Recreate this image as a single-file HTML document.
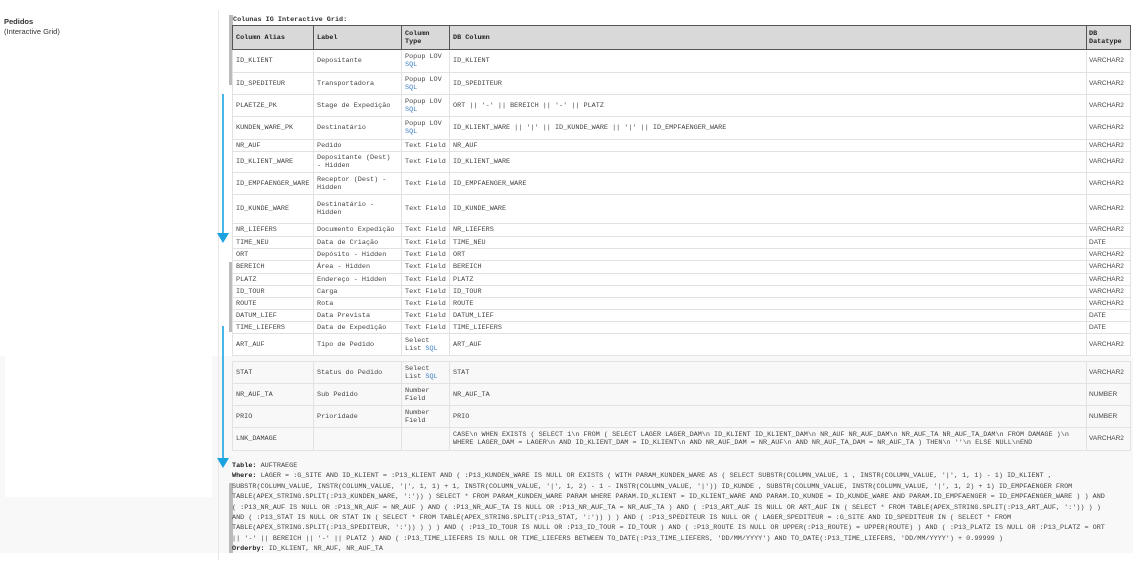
<!DOCTYPE html>
<html><head><meta charset="utf-8"><style>
*{margin:0;padding:0;box-sizing:border-box}
body{width:1133px;height:562px;background:#fff;position:relative;overflow:hidden;font-family:"Liberation Mono",monospace;color:#444}
.abs{position:absolute}
table{position:absolute;left:232px;top:25px;border-collapse:collapse;font-size:6.8px;width:898px;table-layout:fixed}
td,th{border:1px solid #e2e2e2;padding:0 3px;vertical-align:middle;white-space:nowrap;overflow:hidden;line-height:8px;text-align:left}
th{background:#d9d9d9;border:1px solid #555;font-weight:bold;color:#222;height:24px;white-space:normal}
td.w{white-space:normal}
.s{color:#3b7cc4}
.dt{font-family:"Liberation Sans",sans-serif;font-size:6.5px;padding:0 2px}
.code{position:absolute;left:232px;top:461px;font-size:6.8px;line-height:10.4px;white-space:pre;color:#444}
b{color:#222}
</style></head><body>
<div class="abs" style="left:0;top:356px;width:1133px;height:197px;background:#f8f8f8"></div>
<div class="abs" style="left:5px;top:356px;width:207px;height:141px;background:#fff"></div>
<div class="abs" style="left:218px;top:10px;width:1px;height:550px;background:#e8e8e8"></div>
<div class="abs" style="left:4px;top:17px;font-family:'Liberation Sans',sans-serif;font-size:7.5px;line-height:10px;color:#333"><b style="color:#333">Pedidos</b><br>(Interactive Grid)</div>
<div class="abs" style="left:229px;top:15px;width:4px;height:70px;background:#bbb"></div>
<div class="abs" style="left:229px;top:262px;width:4px;height:70px;background:#bbb"></div>
<div class="abs" style="left:229px;top:483px;width:4px;height:70px;background:#bbb"></div>
<svg class="abs" style="left:216px;top:90px" width="16" height="380">
<line x1="7" y1="4" x2="7" y2="146" stroke="#1aa3e0" stroke-width="1.6"/><polygon points="1,143 13,143 7,153" fill="#1aa3e0"/>
<line x1="7" y1="236" x2="7" y2="372" stroke="#1aa3e0" stroke-width="1.6"/><polygon points="1,368 13,368 7,378" fill="#1aa3e0"/>
</svg>
<div class="abs" style="left:233px;top:16px;font-size:6.8px;font-weight:bold;color:#333">Colunas IG Interactive Grid:</div>
<table>
<colgroup><col style="width:81px"><col style="width:88px"><col style="width:48px"><col style="width:637px"><col style="width:44px"></colgroup>
<tr><th>Column Alias</th><th>Label</th><th>Column Type</th><th>DB Column</th><th style="padding:0 2px">DB Datatype</th></tr>
<tr style="height:23px"><td>ID_KLIENT</td><td>Depositante</td><td class="w">Popup LOV <span class="s">SQL</span></td><td>ID_KLIENT</td><td class="dt">VARCHAR2</td></tr>
<tr style="height:22px"><td>ID_SPEDITEUR</td><td>Transportadora</td><td class="w">Popup LOV <span class="s">SQL</span></td><td>ID_SPEDITEUR</td><td class="dt">VARCHAR2</td></tr>
<tr style="height:22px"><td>PLAETZE_PK</td><td>Stage de Expedição</td><td class="w">Popup LOV <span class="s">SQL</span></td><td>ORT || '-' || BEREICH || '-' || PLATZ</td><td class="dt">VARCHAR2</td></tr>
<tr style="height:23px"><td>KUNDEN_WARE_PK</td><td>Destinatário</td><td class="w">Popup LOV <span class="s">SQL</span></td><td>ID_KLIENT_WARE || '|' || ID_KUNDE_WARE || '|' || ID_EMPFAENGER_WARE</td><td class="dt">VARCHAR2</td></tr>
<tr style="height:12px"><td>NR_AUF</td><td>Pedido</td><td>Text Field</td><td>NR_AUF</td><td class="dt">VARCHAR2</td></tr>
<tr style="height:21px"><td>ID_KLIENT_WARE</td><td class="w">Depositante (Dest) - Hidden</td><td>Text Field</td><td>ID_KLIENT_WARE</td><td class="dt">VARCHAR2</td></tr>
<tr style="height:22px"><td>ID_EMPFAENGER_WARE</td><td class="w">Receptor (Dest) - Hidden</td><td>Text Field</td><td>ID_EMPFAENGER_WARE</td><td class="dt">VARCHAR2</td></tr>
<tr style="height:29px"><td>ID_KUNDE_WARE</td><td class="w">Destinatário - Hidden</td><td>Text Field</td><td>ID_KUNDE_WARE</td><td class="dt">VARCHAR2</td></tr>
<tr style="height:13px"><td>NR_LIEFERS</td><td>Documento Expedição</td><td>Text Field</td><td>NR_LIEFERS</td><td class="dt">VARCHAR2</td></tr>
<tr style="height:12px"><td>TIME_NEU</td><td>Data de Criação</td><td>Text Field</td><td>TIME_NEU</td><td class="dt">DATE</td></tr>
<tr style="height:12px"><td>ORT</td><td>Depósito - Hidden</td><td>Text Field</td><td>ORT</td><td class="dt">VARCHAR2</td></tr>
<tr style="height:13px"><td>BEREICH</td><td>Área - Hidden</td><td>Text Field</td><td>BEREICH</td><td class="dt">VARCHAR2</td></tr>
<tr style="height:12px"><td>PLATZ</td><td>Endereço - Hidden</td><td>Text Field</td><td>PLATZ</td><td class="dt">VARCHAR2</td></tr>
<tr style="height:12px"><td>ID_TOUR</td><td>Carga</td><td>Text Field</td><td>ID_TOUR</td><td class="dt">VARCHAR2</td></tr>
<tr style="height:12px"><td>ROUTE</td><td>Rota</td><td>Text Field</td><td>ROUTE</td><td class="dt">VARCHAR2</td></tr>
<tr style="height:12px"><td>DATUM_LIEF</td><td>Data Prevista</td><td>Text Field</td><td>DATUM_LIEF</td><td class="dt">DATE</td></tr>
<tr style="height:12px"><td>TIME_LIEFERS</td><td>Data de Expedição</td><td>Text Field</td><td>TIME_LIEFERS</td><td class="dt">DATE</td></tr>
<tr style="height:22px"><td>ART_AUF</td><td>Tipo de Pedido</td><td class="w">Select List <span class="s">SQL</span></td><td>ART_AUF</td><td class="dt">VARCHAR2</td></tr>
<tr style="height:6px;background:#f8f8f8"><td style="border:none" colspan="5"></td></tr>
<tr style="height:22px"><td>STAT</td><td>Status do Pedido</td><td class="w">Select List <span class="s">SQL</span></td><td>STAT</td><td class="dt">VARCHAR2</td></tr>
<tr style="height:22px"><td>NR_AUF_TA</td><td>Sub Pedido</td><td class="w">Number Field</td><td>NR_AUF_TA</td><td class="dt">NUMBER</td></tr>
<tr style="height:22px"><td>PRIO</td><td>Prioridade</td><td class="w">Number Field</td><td>PRIO</td><td class="dt">NUMBER</td></tr>
<tr style="height:23px"><td>LNK_DAMAGE</td><td></td><td></td><td>CASE\n WHEN EXISTS ( SELECT 1\n FROM ( SELECT LAGER LAGER_DAM\n ID_KLIENT ID_KLIENT_DAM\n NR_AUF NR_AUF_DAM\n NR_AUF_TA NR_AUF_TA_DAM\n FROM DAMAGE )\n<br>WHERE LAGER_DAM = LAGER\n AND ID_KLIENT_DAM = ID_KLIENT\n AND NR_AUF_DAM = NR_AUF\n AND NR_AUF_TA_DAM = NR_AUF_TA ) THEN\n ''\n ELSE NULL\nEND</td><td class="dt">VARCHAR2</td></tr>
</table>
<div class="code"><b>Table:</b> AUFTRAEGE
<b>Where:</b> LAGER = :G_SITE AND ID_KLIENT = :P13_KLIENT AND ( :P13_KUNDEN_WARE IS NULL OR EXISTS ( WITH PARAM_KUNDEN_WARE AS ( SELECT SUBSTR(COLUMN_VALUE, 1 , INSTR(COLUMN_VALUE, '|', 1, 1) - 1) ID_KLIENT ,
SUBSTR(COLUMN_VALUE, INSTR(COLUMN_VALUE, '|', 1, 1) + 1, INSTR(COLUMN_VALUE, '|', 1, 2) - 1 - INSTR(COLUMN_VALUE, '|')) ID_KUNDE , SUBSTR(COLUMN_VALUE, INSTR(COLUMN_VALUE, '|', 1, 2) + 1) ID_EMPFAENGER FROM
TABLE(APEX_STRING.SPLIT(:P13_KUNDEN_WARE, ':')) ) SELECT * FROM PARAM_KUNDEN_WARE PARAM WHERE PARAM.ID_KLIENT = ID_KLIENT_WARE AND PARAM.ID_KUNDE = ID_KUNDE_WARE AND PARAM.ID_EMPFAENGER = ID_EMPFAENGER_WARE ) ) AND
( :P13_NR_AUF IS NULL OR :P13_NR_AUF = NR_AUF ) AND ( :P13_NR_AUF_TA IS NULL OR :P13_NR_AUF_TA = NR_AUF_TA ) AND ( :P13_ART_AUF IS NULL OR ART_AUF IN ( SELECT * FROM TABLE(APEX_STRING.SPLIT(:P13_ART_AUF, ':')) ) )
AND ( :P13_STAT IS NULL OR STAT IN ( SELECT * FROM TABLE(APEX_STRING.SPLIT(:P13_STAT, ':')) ) ) AND ( :P13_SPEDITEUR IS NULL OR ( LAGER_SPEDITEUR = :G_SITE AND ID_SPEDITEUR IN ( SELECT * FROM
TABLE(APEX_STRING.SPLIT(:P13_SPEDITEUR, ':')) ) ) ) AND ( :P13_ID_TOUR IS NULL OR :P13_ID_TOUR = ID_TOUR ) AND ( :P13_ROUTE IS NULL OR UPPER(:P13_ROUTE) = UPPER(ROUTE) ) AND ( :P13_PLATZ IS NULL OR :P13_PLATZ = ORT
|| '-' || BEREICH || '-' || PLATZ ) AND ( :P13_TIME_LIEFERS IS NULL OR TIME_LIEFERS BETWEEN TO_DATE(:P13_TIME_LIEFERS, 'DD/MM/YYYY') AND TO_DATE(:P13_TIME_LIEFERS, 'DD/MM/YYYY') + 0.99999 )
<b>Orderby:</b> ID_KLIENT, NR_AUF, NR_AUF_TA</div>
</body></html>
